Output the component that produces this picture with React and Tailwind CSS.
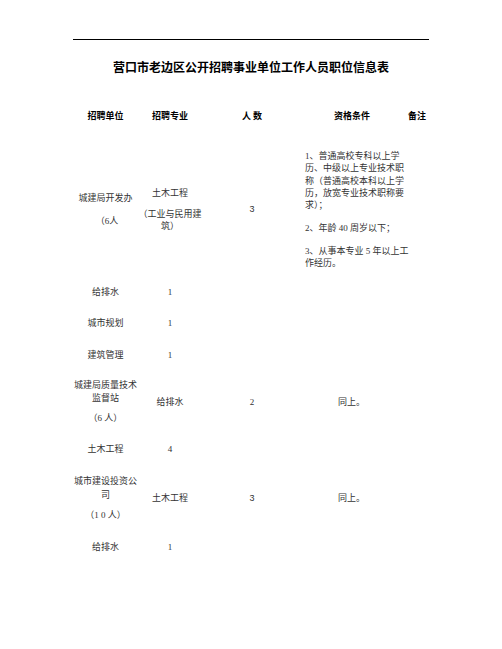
import React from 'react';

const serif = 'font-["Liberation_Serif","Noto_Sans_CJK_SC",serif]';
const cols = 'grid grid-cols-[65px_64px_100px_104px_22px] items-center';

const Cell = ({ children, className = '' }) => (
    <div className={`text-center whitespace-nowrap ${className}`}>{children}</div>
);

// rows where the unit column is empty in the source and the text shifted left
const shortRows = [
    { major: '给排水', count: '1', mt: 'mt-[17px]' },
    { major: '城市规划', count: '1', mt: 'mt-[19px]' },
    { major: '建筑管理', count: '1', mt: 'mt-[20px]' },
];

export default function App() {
    return (
        <div className={`w-[502px] h-[649px] bg-white text-[#333] ${serif}`}>
            <div className="pt-[39px] px-[73px]">
                <div className="h-px bg-black" />

                <h1 className='mt-[19px] text-center text-[12px] leading-[16px] font-bold text-black font-["Noto_Sans_CJK_SC",sans-serif]'>
                    营口市老边区公开招聘事业单位工作人员职位信息表
                </h1>

                {/* header */}
                <div className={`${cols} mt-[35px] text-[9px] leading-[12px] font-bold text-black font-["Noto_Sans_CJK_SC",sans-serif]`}>
                    <Cell>招聘单位</Cell>
                    <Cell>招聘专业</Cell>
                    <Cell>人&nbsp;数</Cell>
                    <Cell className="pr-1">资格条件</Cell>
                    <Cell>备注</Cell>
                </div>

                <div className="text-[9px]">
                    {/* 城建局开发办 */}
                    <div className={`${cols} mt-[28px]`}>
                        <div className="flex flex-col items-center leading-[12px]">
                            <span>城建局开发办</span>
                            <span className="mt-[11px] pl-[3px]">（6人</span>
                        </div>
                        <div className="flex flex-col items-center leading-[12px]">
                            <span>土木工程</span>
                            <span className="mt-[9px]">（工业与民用建</span>
                            <span>筑）</span>
                        </div>
                        <Cell className='font-["Liberation_Sans",sans-serif]'>3</Cell>
                        <div className="pl-[3px] leading-[12.3px] whitespace-nowrap">
                            <p>1、普通高校专科以上学</p>
                            <p>历、中级以上专业技术职</p>
                            <p>称（普通高校本科以上学</p>
                            <p>历，放宽专业技术职称要</p>
                            <p>求）；</p>
                            <p className="mt-[11px]">2、年龄 40 周岁以下；</p>
                            <p className="mt-[10px]">3、从事本专业 5 年以上工</p>
                            <p>作经历。</p>
                        </div>
                        <div />
                    </div>

                    {shortRows.map((r) => (
                        <div key={r.major} className={`${cols} ${r.mt} leading-[12px]`}>
                            <Cell>{r.major}</Cell>
                            <Cell>{r.count}</Cell>
                        </div>
                    ))}

                    {/* 城建局质量技术监督站 */}
                    <div className={`${cols} mt-[18px]`}>
                        <div className="flex flex-col items-center leading-[13px]">
                            <span>城建局质量技术</span>
                            <span>监督站</span>
                            <span className="mt-[7px]">（6 人）</span>
                        </div>
                        <Cell>给排水</Cell>
                        <Cell>2</Cell>
                        <div className="pl-[36px] whitespace-nowrap">同上。</div>
                        <div />
                    </div>

                    <div className={`${cols} mt-[18px] leading-[12px]`}>
                        <Cell>土木工程</Cell>
                        <Cell>4</Cell>
                    </div>

                    {/* 城市建设投资公司 */}
                    <div className={`${cols} mt-[19px]`}>
                        <div className="flex flex-col items-center leading-[14px]">
                            <span>城市建设投资公</span>
                            <span>司</span>
                            <span className="mt-[6px]">（1 0 人）</span>
                        </div>
                        <Cell>土木工程</Cell>
                        <Cell className='font-["Liberation_Sans",sans-serif]'>3</Cell>
                        <div className="pl-[36px] whitespace-nowrap">同上。</div>
                        <div />
                    </div>

                    <div className={`${cols} mt-[19px] leading-[12px]`}>
                        <Cell>给排水</Cell>
                        <Cell>1</Cell>
                    </div>
                </div>
            </div>
        </div>
    );
}
